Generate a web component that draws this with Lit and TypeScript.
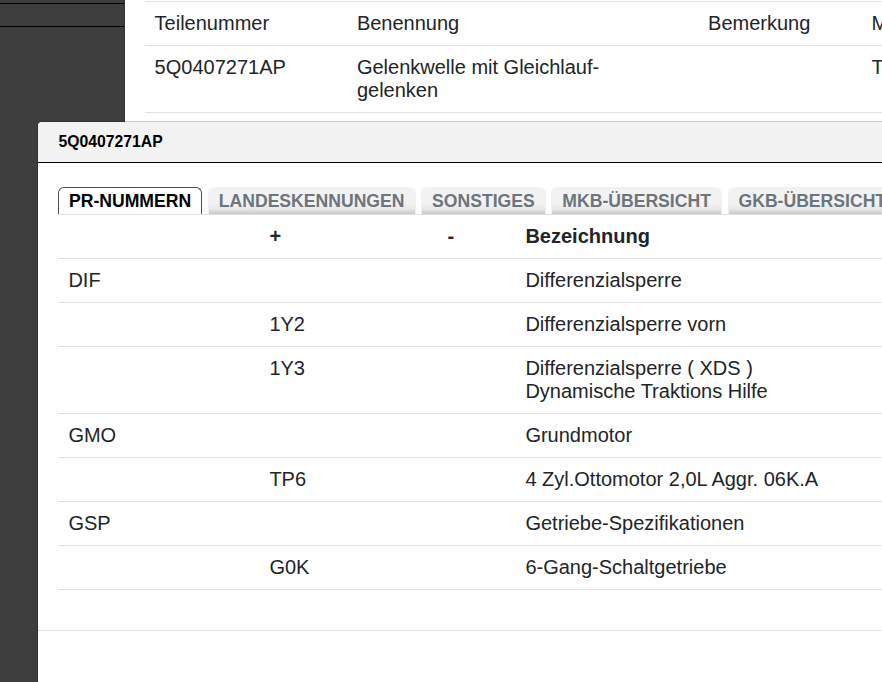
import { LitElement, css, html } from "lit";
import { customElement } from "lit/decorators.js";

interface PrRow {
  family?: string;
  plus?: string;
  minus?: string;
  label: string[];
}

const tabs = [
  "PR-NUMMERN",
  "LANDESKENNUNGEN",
  "SONSTIGES",
  "MKB-ÜBERSICHT",
  "GKB-ÜBERSICHT",
];

const rows: PrRow[] = [
  { family: "DIF", label: ["Differenzialsperre"] },
  { plus: "1Y2", label: ["Differenzialsperre vorn"] },
  {
    plus: "1Y3",
    label: ["Differenzialsperre ( XDS )", "Dynamische Traktions Hilfe"],
  },
  { family: "GMO", label: ["Grundmotor"] },
  { plus: "TP6", label: ["4 Zyl.Ottomotor 2,0L Aggr. 06K.A"] },
  { family: "GSP", label: ["Getriebe-Spezifikationen"] },
  { plus: "G0K", label: ["6-Gang-Schaltgetriebe"] },
];

@customElement("parts-dialog")
export class PartsDialog extends LitElement {
  public static styles = css`
    :host {
      display: block;
      box-sizing: border-box;
      background: #fff;
      background-clip: padding-box;
      border: 1px solid rgba(0, 0, 0, 0.2);
      border-radius: 5px 0 0 0;
      overflow: hidden;
    }

    .header {
      box-sizing: border-box;
      height: 41px;
      padding: 0 20.5px;
      background: #f2f2f2;
      border-bottom: 1px solid #000;
      color: #000;
      font-size: 15.75px;
      font-weight: 700;
      line-height: 39px;
    }

    .body {
      box-sizing: border-box;
      height: 468px;
      padding: 24px 0 0 20px;
      border-bottom: 1px solid #dee2e6;
    }

    .tabs {
      display: flex;
      gap: 5.6px;
      width: max-content;
    }

    .tab {
      box-sizing: border-box;
      height: 27px;
      padding: 0 10px;
      border: 1px solid #f2f2f2;
      border-bottom: 0;
      border-radius: 6px 6px 0 0;
      background: linear-gradient(#f2f2f2 60%, #e8e8e8 80%, #c8c8c8);
      background-clip: padding-box;
      color: #6c757d;
      font-size: 17.6px;
      font-weight: 700;
      line-height: 26px;
    }

    .tab.active {
      border-color: #495057;
      background: #fff;
      color: #000;
    }

    .table {
      border-top: 1px solid #dee2e6;
    }

    .row {
      display: grid;
      grid-template-columns: 201px 178px 78px 600px;
      border-bottom: 1px solid #dee2e6;
    }

    .cell {
      padding: 10px 10.4px;
    }

    .head {
      font-weight: 700;
    }
  `;

  public render() {
    return html`<div class="header">5Q0407271AP</div>
      <div class="body">
        <div class="tabs">
          ${tabs.map(
            (tab, i) =>
              html`<div class="tab ${i === 0 ? "active" : ""}">${tab}</div>`
          )}
        </div>
        <div class="table">
          <div class="row head">
            <div class="cell"></div>
            <div class="cell">+</div>
            <div class="cell">-</div>
            <div class="cell">Bezeichnung</div>
          </div>
          ${rows.map(
            (row) => html`<div class="row">
              <div class="cell">${row.family}</div>
              <div class="cell">${row.plus}</div>
              <div class="cell">${row.minus}</div>
              <div class="cell">
                ${row.label.map((line) => html`<div>${line}</div>`)}
              </div>
            </div>`
          )}
        </div>
      </div>`;
  }
}

@customElement("app-root")
export class AppRoot extends LitElement {
  public static styles = css`
    :host {
      display: block;
      position: relative;
      width: 882px;
      height: 682px;
      overflow: hidden;
      background: #fff;
      color: #212529;
      font-family: "Liberation Sans", Arial, sans-serif;
      font-size: 20px;
      line-height: 23px;
    }

    .page {
      display: flex;
      height: 100%;
    }

    .sidebar {
      box-sizing: border-box;
      flex: none;
      width: 125px;
      padding-top: 3px;
      background: #3e3e3e;
      border-right: 1px solid #333;
    }

    .sidebar-item {
      height: 22px;
      border: 1px solid #000;
      border-width: 1px 0;
    }

    .parts {
      flex: none;
      width: 757px;
      padding: 1px 0 0 20px;
      box-sizing: border-box;
      overflow: hidden;
    }

    .row {
      display: grid;
      grid-template-columns: 202.3px 351.2px 163.5px 200px;
      border-top: 1px solid #dee2e6;
    }

    .row:last-child {
      border-bottom: 1px solid #dee2e6;
    }

    .cell {
      padding: 10px 9.6px;
    }

    .dialog {
      position: absolute;
      top: 121px;
      left: 37px;
      width: 900px;
      height: 600px;
    }
  `;

  public render() {
    return html`<div class="page">
        <div class="sidebar"><div class="sidebar-item"></div></div>
        <div class="parts">
          <div class="row">
            <div class="cell">Teilenummer</div>
            <div class="cell">Benennung</div>
            <div class="cell">Bemerkung</div>
            <div class="cell">M</div>
          </div>
          <div class="row">
            <div class="cell">5Q0407271AP</div>
            <div class="cell">Gelenkwelle mit Gleichlauf-<br />gelenken</div>
            <div class="cell"></div>
            <div class="cell">T</div>
          </div>
        </div>
      </div>
      <parts-dialog class="dialog"></parts-dialog>`;
  }
}
